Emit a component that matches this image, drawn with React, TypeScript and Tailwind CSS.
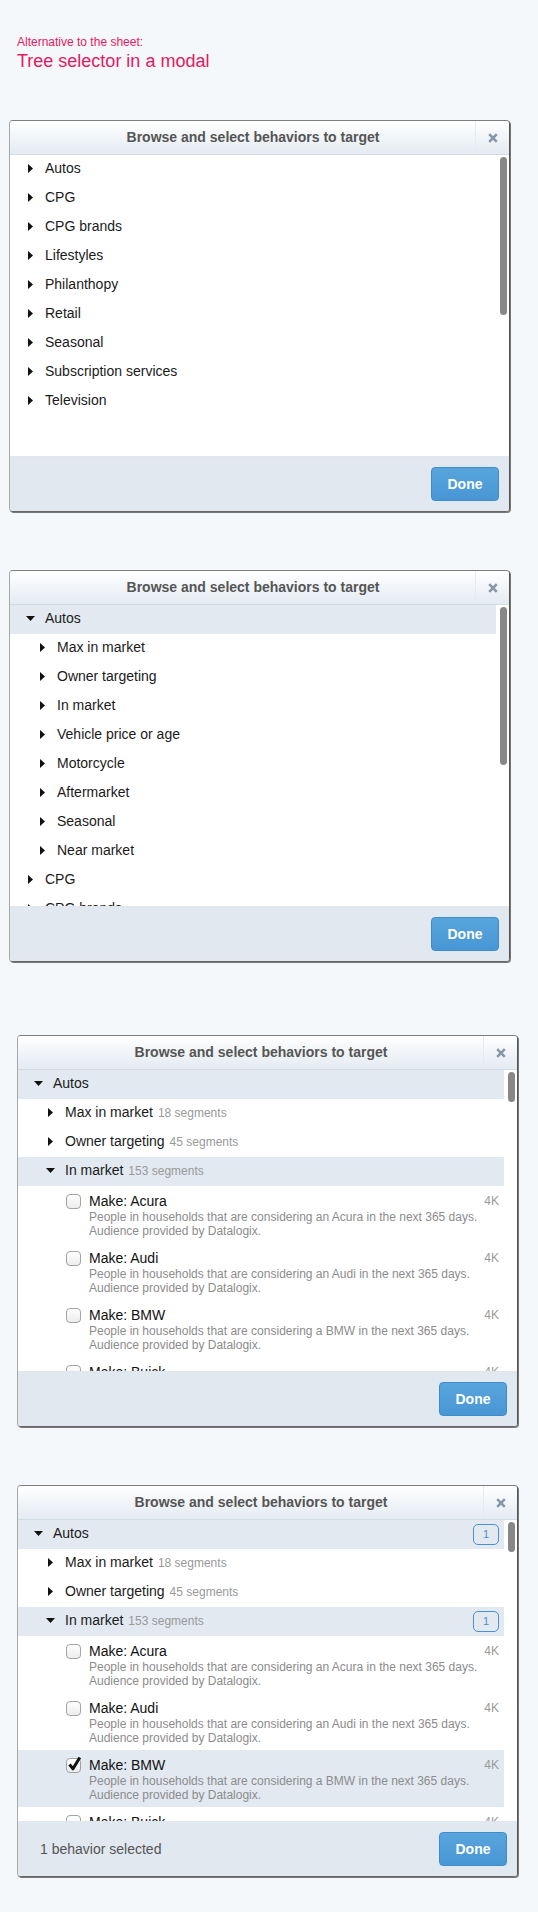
import React from "react";

type NodeRow = {
  kind: "node";
  label: string;
  level: number;
  open?: boolean;
  count?: string;
  hl?: boolean;
  badge?: string;
};
type LeafRow = {
  kind: "leaf";
  label: string;
  desc: string;
  size: string;
  checked?: boolean;
  hl?: boolean;
};
type Row = NodeRow | LeafRow;

function RightTri() {
  return (
    <svg width="5" height="9" viewBox="0 0 5 9">
      <path d="M0 0L5 4.5L0 9Z" fill="#111" />
    </svg>
  );
}

function DownTri() {
  return (
    <svg width="9" height="5" viewBox="0 0 9 5">
      <path d="M0 0H9L4.5 5Z" fill="#111" />
    </svg>
  );
}

function Checkbox({ checked }: { checked?: boolean }) {
  return (
    <div className="relative mt-[1px] h-[15px] w-[15px] shrink-0 rounded-[4px] border border-[#a3a3a3] bg-linear-to-b from-white to-[#ececec]">
      {checked && (
        <svg
          className="absolute left-[1px] top-[-3px] overflow-visible"
          width="13"
          height="15"
          viewBox="0 0 13 15"
        >
          <path
            d="M1.5 8.5L5 12.8L11.8 1.5"
            fill="none"
            stroke="#111"
            strokeWidth="3"
            strokeLinejoin="round"
          />
        </svg>
      )}
    </div>
  );
}

function NodeLine({ r }: { r: NodeRow }) {
  const pad = r.level === 0 ? "pl-[16px]" : "pl-[28px]";
  return (
    <div
      className={`flex h-[29px] shrink-0 items-center pb-[2px] pr-[5px] ${pad} ${
        r.hl ? "bg-[#e2e9f1]" : ""
      }`}
    >
      <div className="flex w-[9px] shrink-0 justify-center">
        {r.open ? <DownTri /> : <RightTri />}
      </div>
      <div className="ml-[10px] flex flex-1 items-baseline">
        <span className="text-[14px] text-[#1a1a1a]">{r.label}</span>
        {r.count && (
          <span className="ml-[5px] text-[12px] text-[#999]">{r.count}</span>
        )}
      </div>
      {r.badge && (
        <div className="mt-[2px] flex h-[21px] w-[26px] items-center justify-center rounded-[5px] border border-[#4b90cf] text-[11px] text-[#4b90cf]">
          {r.badge}
        </div>
      )}
    </div>
  );
}

function LeafLine({ r }: { r: LeafRow }) {
  return (
    <div
      className={`flex h-[57px] shrink-0 pb-[5px] pl-[48px] pr-[5px] pt-[7px] ${
        r.hl ? "bg-[#e2e9f1]" : ""
      }`}
    >
      <Checkbox checked={r.checked} />
      <div className="ml-[8px] flex-1">
        <div className="flex items-center justify-between">
          <span className="text-[14px] leading-[17px] text-[#111]">{r.label}</span>
          <span className="text-[12px] leading-[17px] text-[#999]">{r.size}</span>
        </div>
        <div className="text-[12px] leading-[14px] text-[#8c8c8c]">{r.desc}</div>
        <div className="text-[12px] leading-[14px] text-[#8c8c8c]">
          Audience provided by Datalogix.
        </div>
      </div>
    </div>
  );
}

function Modal({
  rows,
  footerText,
  thumbH,
  className,
}: {
  rows: Row[];
  footerText?: string;
  thumbH: string;
  className: string;
}) {
  return (
    <div
      className={`flex h-[392px] w-[501px] flex-col overflow-hidden rounded-[4px] border border-[#a8a8a8] border-r-[#555] border-b-[#666] border-t-[#7d7d7d] shadow-[1px_1px_0_#777] ${className}`}
    >
      {/* header */}
      <div className="flex h-[34px] shrink-0 border-b border-[#d3dbe3] bg-linear-to-b from-white to-[#e4ebf2]">
        <div className="flex flex-1 items-center justify-center pl-[21px] text-[14px] font-bold text-[#555]">
          Browse and select behaviors to target
        </div>
        <div className="flex w-[34px] items-center justify-center border-l border-[#e6ebf0]">
          <svg width="10" height="10" viewBox="0 0 10 10">
            <path
              d="M1.2 1.2L8.8 8.8M8.8 1.2L1.2 8.8"
              stroke="#8697a8"
              strokeWidth="2.6"
            />
          </svg>
        </div>
      </div>
      {/* body */}
      <div className="flex h-[301px] shrink-0 bg-white">
        <div className="flex w-[486px] flex-col overflow-hidden">
          {rows.map((r, i) =>
            r.kind === "node" ? <NodeLine key={i} r={r} /> : <LeafLine key={i} r={r} />
          )}
        </div>
        <div className="flex-1 pl-[4px] pt-[2px]">
          <div className={`w-[7px] rounded-full bg-[#878787] ${thumbH}`} />
        </div>
      </div>
      {/* footer */}
      <div className="flex flex-1 items-center justify-between border-t border-[#e0e6ec] bg-[#e1e8f0] pl-[22px] pr-[10px]">
        <span className="text-[14px] text-[#555]">{footerText ?? ""}</span>
        <button className="h-[34px] w-[68px] rounded-[4px] border border-[#3e8ccb] bg-linear-to-b from-[#58a5dd] to-[#4896d4] text-[14px] font-bold text-white">
          Done
        </button>
      </div>
    </div>
  );
}

const top: Row[] = [
  "Autos",
  "CPG",
  "CPG brands",
  "Lifestyles",
  "Philanthopy",
  "Retail",
  "Seasonal",
  "Subscription services",
  "Television",
].map((l) => ({ kind: "node", label: l, level: 0 }));

const second: Row[] = [
  { kind: "node", label: "Autos", level: 0, open: true, hl: true },
  ...[
    "Max in market",
    "Owner targeting",
    "In market",
    "Vehicle price or age",
    "Motorcycle",
    "Aftermarket",
    "Seasonal",
    "Near market",
  ].map((l) => ({ kind: "node" as const, label: l, level: 1 })),
  { kind: "node", label: "CPG", level: 0 },
  { kind: "node", label: "CPG brands", level: 0 },
];

function leafs(checked: boolean): Row[] {
  return [
    {
      kind: "leaf",
      label: "Make: Acura",
      desc: "People in households that are considering an Acura in the next 365 days.",
      size: "4K",
    },
    {
      kind: "leaf",
      label: "Make: Audi",
      desc: "People in households that are considering an Audi in the next 365 days.",
      size: "4K",
    },
    {
      kind: "leaf",
      label: "Make: BMW",
      desc: "People in households that are considering a BMW in the next 365 days.",
      size: "4K",
      checked,
      hl: checked,
    },
    {
      kind: "leaf",
      label: "Make: Buick",
      desc: "People in households that are considering a Buick in the next 365 days.",
      size: "4K",
    },
  ];
}

function third(selected: boolean): Row[] {
  return [
    { kind: "node", label: "Autos", level: 0, open: true, hl: true, badge: selected ? "1" : undefined },
    { kind: "node", label: "Max in market", level: 1, count: "18 segments" },
    { kind: "node", label: "Owner targeting", level: 1, count: "45 segments" },
    {
      kind: "node",
      label: "In market",
      level: 1,
      open: true,
      hl: true,
      count: "153 segments",
      badge: selected ? "1" : undefined,
    },
    ...leafs(selected),
  ];
}

export default function App() {
  return (
    <div className="min-h-[1912px] bg-[#f5f8fb] pb-[35px] font-['Liberation_Sans',Arial,Helvetica,sans-serif]">
      <div className="pl-[17px] pt-[35px]">
        <div className="text-[12px] leading-[14px] text-[#e5195e]">Alternative to the sheet:</div>
        <div className="mt-[1px] text-[18px] leading-[22px] text-[#e5195e]">
          Tree selector in a modal
        </div>
      </div>
      <Modal className="ml-[9px] mt-[48px]" rows={top} thumbH="h-[158px]" />
      <Modal className="ml-[9px] mt-[58px]" rows={second} thumbH="h-[158px]" />
      <Modal className="ml-[17px] mt-[73px]" rows={third(false)} thumbH="h-[30px]" />
      <Modal
        className="ml-[17px] mt-[58px]"
        rows={third(true)}
        thumbH="h-[30px]"
        footerText="1 behavior selected"
      />
    </div>
  );
}
